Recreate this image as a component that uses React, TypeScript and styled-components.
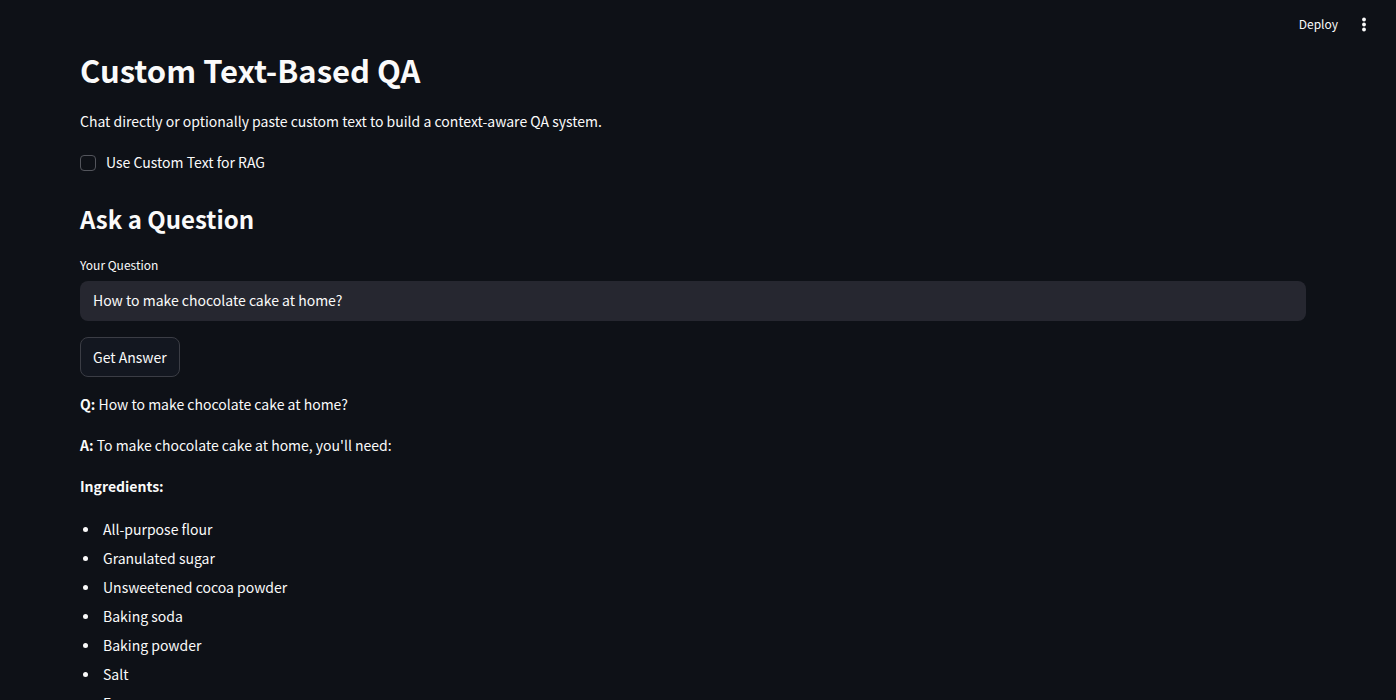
import React, { useState } from "react";
import styled, { createGlobalStyle } from "styled-components";

const GlobalStyle = createGlobalStyle`
  *, *::before, *::after { box-sizing: border-box; }
  html, body { background: #0e1117; }
  body {
    margin: 0;
    height: 100vh;
    overflow: hidden;
    color: #fafafa;
    font-family: "Noto Sans CJK SC", "Noto Sans", sans-serif;
    font-size: 14px;
    line-height: 25px;
  }
`;

const Toolbar = styled.header`
  display: flex;
  justify-content: flex-end;
  align-items: center;
  gap: 8px;
  height: 48px;
  padding: 0 20px;
`;

const ToolbarButton = styled.button`
  display: flex;
  align-items: center;
  height: 24px;
  padding: 0 6px;
  border: 0;
  background: transparent;
  color: #fafafa;
  font: inherit;
  font-size: 12px;
  line-height: 20px;
  cursor: pointer;
`;

const Page = styled.main`
  padding: 0 90px 0 80px;
`;

const Title = styled.h1`
  margin: 0;
  font-size: 31px;
  line-height: 44px;
  font-weight: 700;
`;

const Subtitle = styled.h2`
  margin: 0;
  padding: 24px 0 16px;
  font-size: 24px;
  line-height: 40px;
  font-weight: 700;
`;

const Paragraph = styled.p`
  margin: 0 0 16px;
`;

const Intro = styled(Paragraph)`
  margin-top: 17px;
`;

const CheckLabel = styled.label`
  display: flex;
  align-items: center;
  gap: 10px;
  width: fit-content;
  cursor: pointer;
`;

const Checkbox = styled.input`
  appearance: none;
  width: 16px;
  height: 16px;
  margin: 0;
  border: 1px solid #53555c;
  border-radius: 4px;
  background: #0e1117;

  &:checked {
    background: #ff4b4b;
    border-color: #ff4b4b;
  }
`;

const Field = styled.div`
  display: flex;
  flex-direction: column;
  gap: 6px;
  margin-bottom: 16px;
`;

const FieldLabel = styled.label`
  font-size: 12px;
  line-height: 20px;
`;

const TextInput = styled.input`
  width: 100%;
  height: 40px;
  padding: 0 13px 2px;
  border: 0;
  border-radius: 8px;
  outline: 0;
  background: #262730;
  color: #fafafa;
  font: inherit;
`;

const Button = styled.button`
  height: 40px;
  padding: 0 12px;
  border: 1px solid #3b3d45;
  border-radius: 8px;
  background: #131720;
  color: #fafafa;
  font: inherit;
  cursor: pointer;
`;

const Answer = styled.section`
  padding-top: 15px;
`;

const Ingredients = styled.ul`
  margin: 0;
  padding: 0 0 0 3px;
  list-style: none;
`;

const Ingredient = styled.li`
  display: flex;
  align-items: center;
  gap: 15px;
  padding: 2px 0;

  &::before {
    content: "";
    width: 5px;
    height: 5px;
    border-radius: 50%;
    background: currentColor;
  }
`;

const ingredients = [
  "All-purpose flour",
  "Granulated sugar",
  "Unsweetened cocoa powder",
  "Baking soda",
  "Baking powder",
  "Salt",
  "Eggs",
];

export default function App() {
  const [useCustomText, setUseCustomText] = useState(false);
  const [question, setQuestion] = useState("How to make chocolate cake at home?");

  return (
    <>
      <GlobalStyle />
      <Toolbar>
        <ToolbarButton type="button">Deploy</ToolbarButton>
        <ToolbarButton type="button" aria-label="Main menu">
          <svg width="12" height="16" viewBox="0 0 12 16" fill="currentColor" aria-hidden="true">
            <circle cx="6" cy="3.5" r="1.9" />
            <circle cx="6" cy="8.5" r="1.9" />
            <circle cx="6" cy="13.5" r="1.9" />
          </svg>
        </ToolbarButton>
      </Toolbar>
      <Page>
        <Title>Custom Text-Based QA</Title>
        <Intro>Chat directly or optionally paste custom text to build a context-aware QA system.</Intro>
        <CheckLabel>
          <Checkbox
            type="checkbox"
            checked={useCustomText}
            onChange={(event) => setUseCustomText(event.target.checked)}
          />
          Use Custom Text for RAG
        </CheckLabel>
        <Subtitle>Ask a Question</Subtitle>
        <Field>
          <FieldLabel htmlFor="question">Your Question</FieldLabel>
          <TextInput
            id="question"
            type="text"
            value={question}
            onChange={(event) => setQuestion(event.target.value)}
          />
        </Field>
        <Button type="button">Get Answer</Button>
        <Answer>
          <Paragraph>
            <strong>Q:</strong> How to make chocolate cake at home?
          </Paragraph>
          <Paragraph>
            <strong>A:</strong> To make chocolate cake at home, you'll need:
          </Paragraph>
          <Paragraph>
            <strong>Ingredients:</strong>
          </Paragraph>
          <Ingredients>
            {ingredients.map((item) => (
              <Ingredient key={item}>{item}</Ingredient>
            ))}
          </Ingredients>
        </Answer>
      </Page>
    </>
  );
}
